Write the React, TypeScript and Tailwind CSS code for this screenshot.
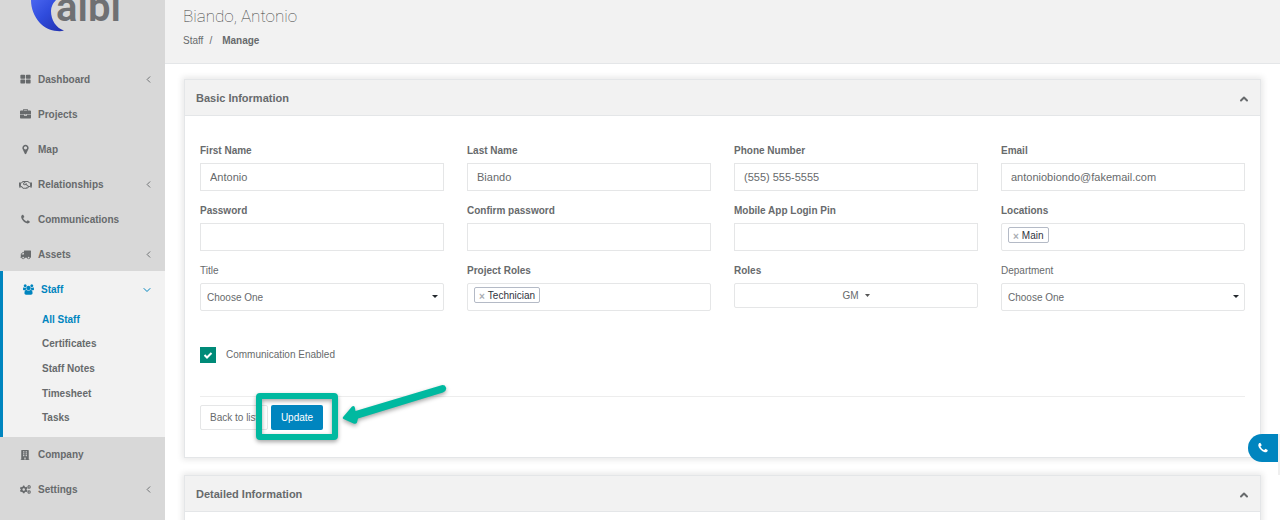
import React, { useState } from 'react';
import { ChevronDown, ChevronLeft, ChevronUp } from 'lucide-react';
import { FaBuilding, FaCogs, FaRegHandshake } from 'react-icons/fa';

const paths = {
  grid: 'M832 1024v384q0 52-38 90t-90 38h-512q-52 0-90-38t-38-90v-384q0-52 38-90t90-38h512q52 0 90 38t38 90zm0-768v384q0 52-38 90t-90 38h-512q-52 0-90-38t-38-90v-384q0-52 38-90t90-38h512q52 0 90 38t38 90zm896 768v384q0 52-38 90t-90 38h-512q-52 0-90-38t-38-90v-384q0-52 38-90t90-38h512q52 0 90 38t38 90zm0-768v384q0 52-38 90t-90 38h-512q-52 0-90-38t-38-90v-384q0-52 38-90t90-38h512q52 0 90 38t38 90z',
  briefcase:
    'M640 256h512v-128h-512v128zm1152 640v480q0 66-47 113t-113 47h-1472q-66 0-113-47t-47-113v-480h672v160q0 26 19 45t45 19h320q26 0 45-19t19-45v-160h672zm-768 0v128h-256v-128h256zm768-480v384h-1792v-384q0-66 47-113t113-47h352v-160q0-40 28-68t68-28h576q40 0 68 28t28 68v160h352q66 0 113 47t47 113z',
  marker:
    'M1152 640q0-106-75-181t-181-75-181 75-75 181 75 181 181 75 181-75 75-181zm256 0q0 109-33 179l-364 774q-16 33-47.5 52t-67.5 19-67.5-19-46.5-52l-365-774q-33-70-33-179 0-212 150-362t362-150 362 150 150 362z',
  phone:
    'M1600 1240q0 27-10 70.5t-21 68.5q-21 50-122 106-94 51-186 51-27 0-53-3.5t-57.5-12.5-47-14.5-55.5-20.5-49-18q-98-35-175-83-127-79-264-216t-216-264q-48-77-83-175-3-9-18-49t-20.5-55.5-14.5-47-12.5-57.5-3.5-53q0-92 51-186 56-101 106-122 25-11 68.5-21t70.5-10q14 0 21 3 18 6 53 76 11 19 30 54t35 63.5 31 53.5q3 4 17.5 25t21.5 35.5 7 28.5q0 20-28.5 50t-62 55-62 53-28.5 46q0 9 5 22.5t8.5 20.5 14 24 11.5 19q76 137 174 235t235 174q2 1 19 11.5t24 14 20.5 8.5 22.5 5q18 0 46-28.5t53-62 55-62 50-28.5q14 0 28.5 7t35.5 21.5 25 17.5q25 15 53.5 31t63.5 35 54 30q70 35 76 53 3 7 3 21z',
  truck:
    'M640 1408q0-52-38-90t-90-38-90 38-38 90 38 90 90 38 90-38 38-90zm-384-512h384v-256h-158q-13 0-22 9l-195 195q-9 9-9 22v30zm1280 512q0-52-38-90t-90-38-90 38-38 90 38 90 90 38 90-38 38-90zm256-1088v1024q0 15-4 26.5t-13.5 18.5-16.5 11.5-23.5 6-22.5 2-25.5 0-22.5-.5q0 106-75 181t-181 75-181-75-75-181h-384q0 106-75 181t-181 75-181-75-75-181h-64q-3 0-22.5.5t-25.5 0-22.5-2-23.5-6-16.5-11.5-13.5-18.5-4-26.5q0-26 19-45t45-19v-320q0-8-.5-35t0-38 2.5-34.5 6.5-37 14-30.5 22.5-30l198-198q19-19 50.5-32t58.5-13h160v-192q0-26 19-45t45-19h1024q26 0 45 19t19 45z',
  users:
    'M593 896q-162 5-265 128h-134q-82 0-138-40.5t-56-118.5q0-353 124-353 6 0 43.5 21t97.5 42.5 119 21.5q67 0 133-23-5 37-5 66 0 139 81 256zm1071 637q0 120-73 189.5t-194 69.5h-874q-121 0-194-69.5t-73-189.5q0-53 3.5-103.5t14-109 26.5-108.5 43-97.5 62-81 85.5-53.5 111.5-20q10 0 43 21.5t73 48 107 48 135 21.5 135-21.5 107-48 73-48 43-21.5q61 0 111.5 20t85.5 53.5 62 81 43 97.5 26.5 108.5 14 109 3.5 103.5zm-1024-1277q0 106-75 181t-181 75-181-75-75-181 75-181 181-75 181 75 75 181zm704 384q0 159-112.5 271.5t-271.5 112.5-271.5-112.5-112.5-271.5 112.5-271.5 271.5-112.5 271.5 112.5 112.5 271.5zm576 225q0 78-56 118.5t-138 40.5h-134q-103-123-265-128 81-117 81-256 0-29-5-66 66 23 133 23 59 0 119-21.5t97.5-42.5 43.5-21q124 0 124 353zm-128-609q0 106-75 181t-181 75-181-75-75-181 75-181 181-75 181 75 75 181z',
};

const Glyph: React.FC<{ name: keyof typeof paths; className?: string }> = ({ name, className = 'h-[11px] w-[11px]' }) => (
  <svg viewBox={name === 'users' ? '0 0 1920 1792' : '0 0 1792 1792'} className={className} fill="currentColor" aria-hidden="true">
    <path d={paths[name]} />
  </svg>
);

const topItems = [
  { label: 'Dashboard', icon: <Glyph name="grid" />, more: true },
  { label: 'Projects', icon: <Glyph name="briefcase" /> },
  { label: 'Map', icon: <Glyph name="marker" /> },
  { label: 'Relationships', icon: <FaRegHandshake className="h-3 w-[13px]" />, more: true },
  { label: 'Communications', icon: <Glyph name="phone" /> },
  { label: 'Assets', icon: <Glyph name="truck" />, more: true },
];

const bottomItems = [
  { label: 'Company', icon: <FaBuilding className="h-[10px] w-[10px]" /> },
  { label: 'Settings', icon: <FaCogs className="h-[11px] w-[11px]" />, more: true },
];

const staffItems = ['All Staff', 'Certificates', 'Staff Notes', 'Timesheet', 'Tasks'];

const NavItem: React.FC<{ label: string; icon: React.ReactNode; more?: boolean; open?: boolean }> = ({ label, icon, more, open }) => (
  <a href="#" className="flex h-[35px] items-center pr-3 pl-[18px]">
    <span className="mr-1.5 flex w-3.5 shrink-0 justify-center">{icon}</span>
    <span className="flex-1">{label}</span>
    {more && (open ? <ChevronDown className="h-3 w-3" strokeWidth={2} /> : <ChevronLeft className="-mr-px h-[11px] w-[11px]" strokeWidth={2} />)}
  </a>
);

const Logo = () => (
  <div className="flex h-[62px] items-start overflow-hidden pl-[30px]">
    <svg viewBox="0 0 36 34" className="h-[34px] w-9 shrink-0" aria-hidden="true">
      <defs>
        <linearGradient id="moon" x1="0" y1="0" x2="1" y2="1">
          <stop offset="0" stopColor="#4a66f0" />
          <stop offset="0.45" stopColor="#2f4bdc" />
          <stop offset="1" stopColor="#2231ad" />
        </linearGradient>
      </defs>
      <path d="M1 0C1 17 14 31 27 31Q31 31.500 34 30.500C26 28 21 20 21 11Q21 5 26 0Z" fill="url(#moon)" />
    </svg>
    <span className="-mt-4 -ml-[10px] font-['Roboto'] text-[40px] leading-[48px] font-semibold text-[#6f7073]">albi</span>
  </div>
);

const box = 'w-full border border-[#e5e6e7] bg-white outline-none';

const Field: React.FC<{ id: string; label: string; light?: boolean; children: React.ReactNode }> = ({ id, label, light, children }) => (
  <div className="min-w-0">
    <label htmlFor={id} className={`mb-[5px] block leading-[15px] ${light ? '' : 'font-bold'}`}>
      {label}
    </label>
    {children}
  </div>
);

const TextField: React.FC<{ id: string; label: string; type?: string; value?: string }> = ({ id, label, type = 'text', value }) => (
  <Field id={id} label={label}>
    <input id={id} type={type} defaultValue={value} className={`${box} h-7 px-[9px] text-[11px]`} />
  </Field>
);

const TagField: React.FC<{ id: string; label: string; tag: string }> = ({ id, label, tag }) => (
  <Field id={id} label={label}>
    <div className={`${box} flex h-7 items-start rounded-xs px-1.5 py-[3px]`}>
      <span className="flex h-4 shrink-0 items-center rounded-xs border border-[#b4bac6] px-1 text-[#2f3440]">
        <button type="button" aria-label={`Remove ${tag}`} className="mr-[3px] pt-0.5 font-bold text-[#a9adb3]">
          ×
        </button>
        {tag}
      </span>
      <input id={id} className="min-w-0 flex-1 outline-none" />
    </div>
  </Field>
);

const SelectField: React.FC<{ id: string; label: string }> = ({ id, label }) => (
  <Field id={id} label={label} light>
    <div className="relative">
      <select id={id} className={`${box} block h-7 appearance-none rounded-xs px-1.5`}>
        <option>Choose One</option>
      </select>
      <svg viewBox="0 0 6 3" className="pointer-events-none absolute top-3 right-1.5 h-[3px] w-1.5" aria-hidden="true">
        <path d="M0 0h6L3 3z" fill="#23282d" />
      </svg>
    </div>
  </Field>
);

const Panel: React.FC<{ title: string; children?: React.ReactNode }> = ({ title, children }) => (
  <section className="border border-[#e4e6e8] bg-white shadow-[0_0_6px_2px_rgba(0,0,0,0.09)]">
    <header className="flex h-9 items-center justify-between border-b border-[#e4e6e8] bg-[#f2f2f2] pt-0.5 pr-2.5 pl-[11px]">
      <h2 className="text-[11px] font-bold">{title}</h2>
      <button type="button" aria-label={`Collapse ${title}`}>
        <ChevronUp className="h-3 w-3" strokeWidth={4} />
      </button>
    </header>
    <div className="px-[15px] pt-[27px] pb-[27px]">{children}</div>
  </section>
);

// Frame and arrow that point at the Update button
const Callout = () => (
  <svg
    viewBox="0 0 200 66"
    className="pointer-events-none absolute -top-5 -left-5 h-[66px] w-[200px] max-w-none drop-shadow-[0_2px_2px_rgba(0,0,0,0.35)]"
    aria-hidden="true"
  >
    <rect x="8" y="11" width="76" height="41" rx="1" fill="none" stroke="#00b9a0" strokeWidth="6" />
    <path
      d="M92.500 31.500 101 21.500Q103.500 20 104 23L104.500 26 190.500 0.200Q194 -0.500 195 2.500T192 7.500L107 33.500 106 37.500Q105 39.500 102.500 38.500L92.500 34Q91 33 92.500 31.500Z"
      fill="#00b9a0"
    />
  </svg>
);

export default function App() {
  const [enabled, setEnabled] = useState(true);

  return (
    <div className="flex h-screen overflow-hidden bg-white font-['Liberation_Sans',Arial,sans-serif] text-[10px] text-[#676a6c]">
      <aside className="w-[165px] shrink-0 bg-[#d8d8d8] font-bold">
        <Logo />
        <nav>
          {topItems.map((item) => (
            <NavItem key={item.label} {...item} />
          ))}
          <div className="-mt-px border-l-[3px] border-[#0085bf] bg-[#f2f2f2] pt-px">
            <div className="text-[#0085bf]">
              <NavItem label="Staff" icon={<Glyph name="users" />} more open />
            </div>
            <ul className="grid h-[130px] grid-rows-5 pb-[7px]">
              {staffItems.map((label, i) => (
                <li key={label} className="flex items-center pl-[39px]">
                  <a href="#" className={i === 0 ? 'text-[#0085bf]' : ''}>
                    {label}
                  </a>
                </li>
              ))}
            </ul>
          </div>
          {bottomItems.map((item) => (
            <NavItem key={item.label} {...item} />
          ))}
        </nav>
      </aside>

      <main className="min-w-0 flex-1">
        <header className="h-16 border-b border-[#e4e6e8] bg-[#f2f2f2] pt-1 pl-[18px]">
          <h1 className="font-['Roboto'] text-[17px] leading-6 font-thin text-[#3c3e40]">Biando, Antonio</h1>
          <nav className="mt-[5px] flex gap-1.5 leading-4">
            <a href="#">Staff</a>
            <span>/</span>
            <strong className="ml-1">Manage</strong>
          </nav>
        </header>

        <div className="flex flex-col gap-[17px] pt-[15px] pr-[19px] pl-[19px]">
          <Panel title="Basic Information">
            <form onSubmit={(e) => e.preventDefault()}>
              <div className="grid grid-cols-4 gap-x-[23px] gap-y-3">
                <TextField id="first" label="First Name" value="Antonio" />
                <TextField id="last" label="Last Name" value="Biando" />
                <TextField id="phone" label="Phone Number" value="(555) 555-5555" />
                <TextField id="email" label="Email" value="antoniobiondo@fakemail.com" />
                <TextField id="password" label="Password" type="password" />
                <TextField id="confirm" label="Confirm password" type="password" />
                <TextField id="pin" label="Mobile App Login Pin" />
                <TagField id="locations" label="Locations" tag="Main" />
                <SelectField id="title" label="Title" />
                <TagField id="project-roles" label="Project Roles" tag="Technician" />
                <Field id="roles" label="Roles">
                  <button id="roles" type="button" className={`${box} flex h-[25px] items-center justify-center gap-1.5 rounded-xs`}>
                    GM
                    <svg viewBox="0 0 5 3" className="h-[3px] w-[5px]" aria-hidden="true">
                      <path d="M0 0h5L2.500 3z" fill="#555" />
                    </svg>
                  </button>
                </Field>
                <SelectField id="department" label="Department" />
              </div>

              <label className="mt-9 flex items-start gap-[10px]">
                <span className="relative h-4 w-4">
                  <input
                    type="checkbox"
                    checked={enabled}
                    onChange={(e) => setEnabled(e.target.checked)}
                    className="peer block h-4 w-4 appearance-none border border-[#008a78] checked:bg-[#008a78]"
                  />
                  <svg viewBox="0 0 16 16" className="pointer-events-none absolute inset-0 hidden h-4 w-4 peer-checked:block" aria-hidden="true">
                    <path d="M4.500 8 7 10.500 11.500 6" fill="none" stroke="#fff" strokeWidth="2" />
                  </svg>
                </span>
                <span>Communication Enabled</span>
              </label>

              <hr className="mt-[33px] mb-2 border-[#ededed]" />
              <div className="flex gap-[3px]">
                <a href="#" className="flex h-[25px] w-[68px] items-center rounded-xs border border-[#e5e6e7] pl-[9px] whitespace-nowrap">
                  Back to list
                </a>
                <div className="relative">
                  <button type="submit" className="block h-[25px] w-[52px] rounded-xs bg-[#0085bf] text-white">
                    Update
                  </button>
                  <Callout />
                </div>
              </div>
            </form>
          </Panel>

          <Panel title="Detailed Information" />
        </div>
      </main>

      {/* Call tab on the window's edge */}
      <div className="fixed right-0 bottom-[45px] flex h-[41px] items-start">
        <button type="button" aria-label="Call" className="flex h-7 w-[30px] items-center justify-center rounded-l-full bg-[#0085bf] text-white">
          <Glyph name="phone" className="h-3 w-3" />
        </button>
        <span className="h-full w-0.5 bg-[#efefef]" />
      </div>
    </div>
  );
}
